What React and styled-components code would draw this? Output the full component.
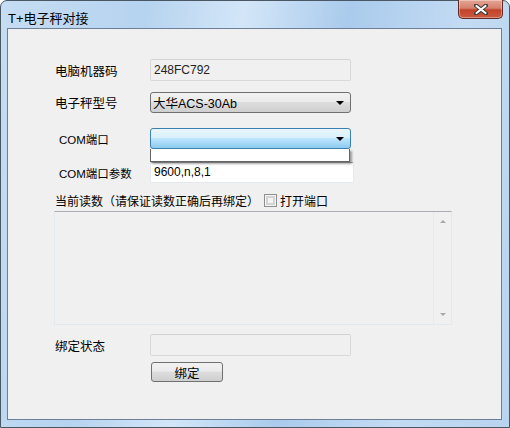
import React from 'react'
import styled, { createGlobalStyle } from 'styled-components'

const Global = createGlobalStyle`
    html, body {
        margin: 0;
        padding: 0;
        background: #fff;
    }
    body {
        font-family: "Liberation Sans", "Noto Sans CJK SC", sans-serif;
        font-size: 12px;
        color: #000;
    }
`

const Window = styled.div`
    width: 510px;
    height: 428px;
    box-sizing: border-box;
    display: flex;
    flex-direction: column;
    border: 1px solid #4a5866;
    border-radius: 7px 7px 0 0;
    background: linear-gradient(100deg, #c6ddf3 0%, #b6d3ef 25%, #d3e6f8 42%, #aacbec 60%, #c3dbf3 80%, #b9d4ef 100%);
    padding: 0 7px 7px 6px;
`

const TitleBar = styled.div`
    height: 27px;
    display: flex;
    align-items: flex-start;
    justify-content: space-between;
`

const Title = styled.div`
    padding: 7px 0 0 1px;
    font-size: 13px;
    color: #000;
`

const CloseButton = styled.div`
    width: 45px;
    height: 19px;
    box-sizing: border-box;
    margin-top: -1px;
    margin-right: -1px;
    border: 1px solid #5d2a25;
    border-top: none;
    border-radius: 0 0 5px 5px;
    background: linear-gradient(#e4a494 0%, #d6816c 45%, #c2432a 55%, #cc5a3f 100%);
    display: flex;
    align-items: center;
    justify-content: center;
    box-shadow: inset 0 0 0 1px rgba(255, 255, 255, 0.35);
`

const Client = styled.div`
    flex: 1;
    background: #f0f0f0;
    border: 1px solid #6e7f95;
    padding: 0 0 0 47px;
    display: flex;
    flex-direction: column;
`

const Row = styled.div`
    display: grid;
    grid-template-columns: 95px auto;
    align-items: center;
    margin-top: ${p => p.$top}px;
`

const Label = styled.div`
    padding-left: ${p => (p.$indent ? 4 : 0)}px;
    font-size: ${p => (p.$small ? 11.5 : 12.5)}px;
    white-space: nowrap;
`

const TextBox = styled.div`
    width: ${p => p.$w}px;
    height: ${p => p.$h}px;
    box-sizing: border-box;
    border: 1px solid ${p => (p.$disabled ? '#d9d9d9' : '#e3e9ef')};
    border-top-color: ${p => (p.$disabled ? '#d3d3d3' : '#abadb3')};
    border-radius: 2px;
    background: ${p => (p.$disabled ? '#f0f0f0' : '#fff')};
    padding: ${p => (p.$disabled ? 2 : 1)}px 3px 0;
    font-size: 12px;
    color: ${p => (p.$disabled ? '#222' : '#000')};
    line-height: 16px;
`

const ComboWrap = styled.div`
    position: relative;
    width: 201px;
`

const Combo = styled.div`
    height: 21px;
    box-sizing: border-box;
    border: 1px solid ${p => (p.$active ? '#3c7fb1' : '#707070')};
    border-radius: 3px;
    background: ${p => (p.$active
        ? 'linear-gradient(#eaf6fd 0%, #d9f0fc 45%, #bee6fd 50%, #8ccbef 100%)'
        : 'linear-gradient(#f2f2f2 0%, #ebebeb 45%, #dddddd 50%, #cfcfcf 100%)')};
    display: flex;
    align-items: center;
    justify-content: space-between;
    padding: 0 6px 0 2px;
    font-size: 12.5px;
`

const Arrow = styled.span`
    width: 0;
    height: 0;
    border-left: 4px solid transparent;
    border-right: 4px solid transparent;
    border-top: 4px solid #000;
`

const DropList = styled.div`
    position: absolute;
    left: 0;
    top: 21px;
    width: 200px;
    height: 13px;
    box-sizing: border-box;
    background: #fff;
    border: 1px solid #646464;
    border-top: none;
    box-shadow: 2px 2px 2px rgba(0, 0, 0, 0.35);
    z-index: 2;
`

const SectionHead = styled.div`
    display: flex;
    align-items: center;
    margin-top: 9px;
    font-size: 12px;
`

const Check = styled.span`
    width: 13px;
    height: 13px;
    box-sizing: border-box;
    margin: 0 3px 0 5px;
    border: 1px solid #8f8f8f;
    background: #f4f4f4;
    box-shadow: inset 0 0 0 1px #f4f4f4, inset 0 0 0 3px #d4d4d4;
`

const ReadBox = styled.div`
    width: 398px;
    height: 114px;
    box-sizing: border-box;
    margin: 2px 0 0 -1px;
    border: 1px solid #e3e9ef;
    border-top-color: #abadb3;
    background: #f0f0f0;
    display: flex;
    justify-content: flex-end;
`

const ScrollBar = styled.div`
    width: 17px;
    border-left: 1px solid #e8e8e8;
    background: #f0f0f0;
    display: flex;
    flex-direction: column;
    justify-content: space-between;
    align-items: center;
    padding: 8px 0 8px;
`

const ScrollArrow = styled.span`
    width: 0;
    height: 0;
    border-left: 3px solid transparent;
    border-right: 3px solid transparent;
    ${p => (p.$up ? 'border-bottom: 3px solid #a8a8a8;' : 'border-top: 3px solid #a8a8a8;')}
`

const Button = styled.div`
    width: 72px;
    height: 20px;
    box-sizing: border-box;
    margin: 6px 0 0 96px;
    border: 1px solid #707070;
    border-radius: 3px;
    background: linear-gradient(#f2f2f2 0%, #ebebeb 45%, #dddddd 50%, #cfcfcf 100%);
    display: flex;
    align-items: center;
    justify-content: center;
    font-size: 12.5px;
`

const App = () => {
    return (
        <>
            <Global />
            <Window>
                <TitleBar>
                    <Title>T+电子秤对接</Title>
                    <CloseButton>
                        <svg width="14" height="11" viewBox="0 0 14 11">
                            <path d="M2 1.5 L12 9.5 M12 1.5 L2 9.5" stroke="#3a3a3a" strokeWidth="4" strokeLinecap="round" />
                            <path d="M2.5 2 L11.5 9 M11.5 2 L2.5 9" stroke="#fff" strokeWidth="2.2" strokeLinecap="round" />
                        </svg>
                    </CloseButton>
                </TitleBar>
                <Client>
                    <Row $top={30}>
                        <Label>电脑机器码</Label>
                        <TextBox $w={201} $h={22} $disabled>248FC792</TextBox>
                    </Row>
                    <Row $top={11}>
                        <Label>电子秤型号</Label>
                        <ComboWrap>
                            <Combo>大华ACS-30Ab<Arrow /></Combo>
                        </ComboWrap>
                    </Row>
                    <Row $top={15}>
                        <Label $indent $small>COM端口</Label>
                        <ComboWrap>
                            <Combo $active><span /><Arrow /></Combo>
                            <DropList />
                        </ComboWrap>
                    </Row>
                    <Row $top={13}>
                        <Label $indent $small>COM端口参数</Label>
                        <TextBox $w={204} $h={21}>9600,n,8,1</TextBox>
                    </Row>
                    <SectionHead>
                        当前读数（请保证读数正确后再绑定）
                        <Check />
                        打开端口
                    </SectionHead>
                    <ReadBox>
                        <ScrollBar>
                            <ScrollArrow $up />
                            <ScrollArrow />
                        </ScrollBar>
                    </ReadBox>
                    <Row $top={9}>
                        <Label>绑定状态</Label>
                        <TextBox $w={201} $h={22} $disabled />
                    </Row>
                    <Button>绑定</Button>
                </Client>
            </Window>
        </>
    )
}

export default App
